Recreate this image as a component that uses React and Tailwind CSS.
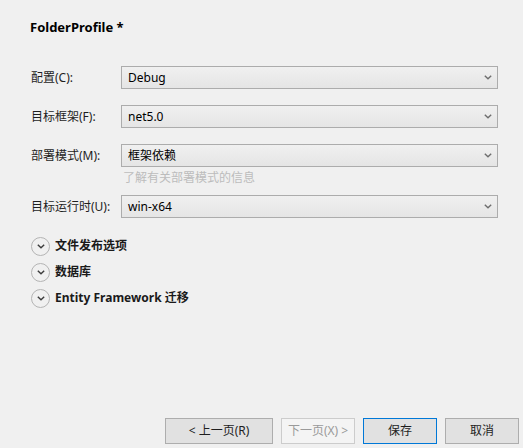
import React from "react";

const font = { fontFamily: '"Noto Sans", "Noto Sans CJK SC", sans-serif' };

function Chevron({ className }) {
  return (
    <svg width="8" height="5" viewBox="0 0 8 5" className={className}>
      <path d="M0.8 0.8 L4 3.8 L7.2 0.8" fill="none" stroke="currentColor" strokeWidth="1.4" />
    </svg>
  );
}

function Select({ value }) {
  return (
    <div className="flex-1 h-[23px] border border-[#acacac] bg-gradient-to-b from-[#f0f0f0] to-[#e5e5e5] flex items-center pl-[6px] pr-[5px]">
      <span className="flex-1 text-[12px] text-black leading-none">{value}</span>
      <Chevron className="text-[#6e6e6e]" />
    </div>
  );
}

function Row({ label, value, className = "" }) {
  return (
    <div className={"flex items-center " + className}>
      <div className="w-[90px] text-[12px] text-[#1e1e1e]">{label}</div>
      <Select value={value} />
    </div>
  );
}

function Section({ label }) {
  return (
    <div className="flex items-center h-[26px]">
      <div className="w-[19px] h-[19px] rounded-full border border-[#b4b4b4] flex items-center justify-center">
        <Chevron className="text-[#3c3c3c] mt-[1px]" />
      </div>
      <span className="ml-[5px] text-[12px] font-bold text-[#1a1a1a]">{label}</span>
    </div>
  );
}

function Btn({ children, variant }) {
  let cls = "h-[26px] flex items-center justify-center text-[12px] border ";
  if (variant === "disabled") cls += "border-[#cccccc] bg-[#f4f4f4] text-[#9a9a9a]";
  else if (variant === "primary") cls += "border-[#0078d7] bg-[#e1e1e1] text-[#1e1e1e]";
  else cls += "border-[#adadad] bg-[#e1e1e1] text-[#1e1e1e]";
  return <div className={cls + " " + (variant === "wide" ? "w-[108px]" : "w-[74px]")}>{children}</div>;
}

export default function App() {
  return (
    <div style={font} className="w-[523px] h-[448px] bg-[#f0f0f0] flex flex-col">
      <div className="pl-[31px] pr-[25px]">
        <div className="pt-[18px] ml-[-1px] text-[13px] leading-[18px] font-bold text-black">FolderProfile *</div>
        <Row label="配置(C):" value="Debug" className="mt-[30px]" />
        <Row label="目标框架(F):" value="net5.0" className="mt-[16px]" />
        <Row label="部署模式(M):" value="框架依赖" className="mt-[16px]" />
        <div className="ml-[92px] mt-[3px] text-[12px] leading-[16px] text-[#bcbcbc]">了解有关部署模式的信息</div>
        <Row label="目标运行时(U):" value="win-x64" className="mt-[9px]" />
        <div className="mt-[15px]">
          <Section label="文件发布选项" />
          <Section label="数据库" />
          <Section label="Entity Framework 迁移" />
        </div>
      </div>
      <div className="mt-auto flex justify-end gap-[8px] pr-[4px] pb-[4px]">
        <Btn variant="wide">&lt; 上一页(R)</Btn>
        <Btn variant="disabled">下一页(X) &gt;</Btn>
        <Btn variant="primary">保存</Btn>
        <Btn>取消</Btn>
      </div>
    </div>
  );
}
